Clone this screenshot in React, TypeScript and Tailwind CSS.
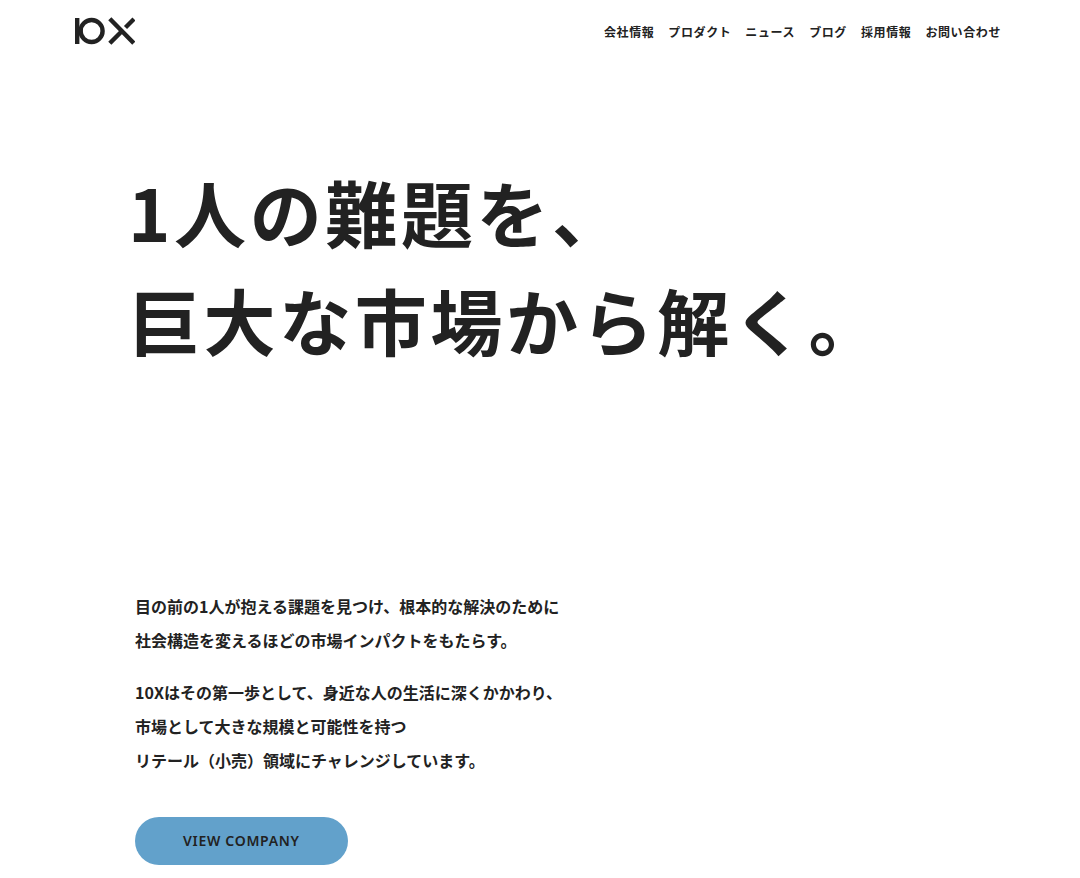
const navItems = [
  { label: '会社情報', href: '#company' },
  { label: 'プロダクト', href: '#product' },
  { label: 'ニュース', href: '#news' },
  { label: 'ブログ', href: '#blog' },
  { label: '採用情報', href: '#recruit' },
  { label: 'お問い合わせ', href: '#contact' },
];

function Logo() {
  return (
    <svg
      width="60"
      height="28"
      viewBox="0 0 60 28"
      fill="none"
      stroke="currentColor"
      strokeWidth="4.4"
      aria-hidden="true"
    >
      <path d="M2.2 1v26" />
      <circle cx="16.6" cy="14" r="11" />
      <path d="M4 12 8 5.5 7.5 18.5 4 15z" fill="currentColor" stroke="none" />
      <path d="M34.8 1.8l24 24.4M34.8 26.2l12-12M50.5 10.5l8.5-8.5" />
    </svg>
  );
}

export default function App() {
  return (
    <div className="min-h-screen bg-white text-[#222222] font-['Noto_Sans_CJK_JP',sans-serif]">
      <header className="flex items-center justify-between pl-[75px] pr-[79px] h-[62px]">
        <a href="#top" aria-label="10X">
          <Logo />
        </a>
        <nav className="pt-0.5">
          <ul className="flex gap-3.5">
            {navItems.map((item) => (
              <li key={item.label}>
                <a
                  href={item.href}
                  className="block text-xs font-bold tracking-wider hover:opacity-70"
                >
                  {item.label}
                </a>
              </li>
            ))}
          </ul>
        </nav>
      </header>

      <main className="pt-[95px] pr-20 pb-3">
        <h1 className="pl-32 text-7xl leading-[108px] font-bold tracking-wider">
          1人の難題を、
          <br />
          巨大な市場から解く。
        </h1>

        <div className="pl-[135px] pt-54">
          <div className="flex flex-col gap-[18px] text-base leading-[34px] font-bold">
            <p>
              目の前の1人が抱える課題を見つけ、根本的な解決のために
              <br />
              社会構造を変えるほどの市場インパクトをもたらす。
            </p>
            <p>
              10Xはその第一歩として、身近な人の生活に深くかかわり、
              <br />
              市場として大きな規模と可能性を持つ
              <br />
              リテール（小売）領域にチャレンジしています。
            </p>
          </div>

          <a
            href="#company"
            className="mt-10 inline-flex h-12 items-center justify-center rounded-full bg-[#62a1cb] px-12 text-sm font-semibold tracking-wider font-['Noto_Sans',sans-serif] hover:opacity-80"
          >
            VIEW COMPANY
          </a>
        </div>
      </main>
    </div>
  );
}
